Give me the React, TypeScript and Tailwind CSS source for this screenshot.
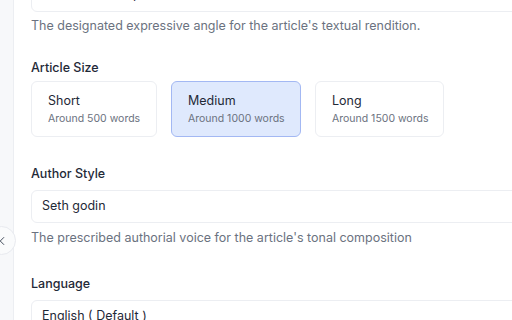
import { ChevronLeft } from "lucide-react";

const sizes = [
  { title: "Short", sub: "Around 500 words", w: "w-[126px]", active: false },
  { title: "Medium", sub: "Around 1000 words", w: "w-[130px]", active: true },
  { title: "Long", sub: "Around 1500 words", w: "w-[129px]", active: false },
];

export default function App() {
  return (
    <div
      className="relative flex h-[320px] w-[512px] overflow-hidden bg-white"
      style={{ fontFamily: "Inter, 'Noto Sans', sans-serif" }}
    >
      <div className="w-[14px] shrink-0 border-r border-[#eceef2] bg-[#f7f8fa]" />

      <button className="absolute left-[-13px] top-[226px] flex h-[29px] w-[29px] items-center justify-end rounded-full border border-[#e8eaef] bg-[#fafbfc] pr-[6px] text-[#374151]">
        <ChevronLeft size={14} strokeWidth={1.6} />
      </button>

      <div className="block w-[560px] shrink-0 self-start pl-[17px]">
        <div className="mt-[-21px] flex h-[33px] items-center rounded-md border border-[#eceef2] px-[10px] text-[12.5px] text-[#1f2937]">
          Formal (Neutral)
        </div>
        <p className="mt-[4px] text-[12.5px] leading-[20px] text-[#6b7280]">
          The designated expressive angle for the article's textual rendition.
        </p>

        <h3 className="mt-[22px] text-[12.5px] font-medium leading-[20px] text-[#1f2937]">Article Size</h3>
        <div className="mt-[3px] flex gap-[14px]">
          {sizes.map((s) => (
            <div
              key={s.title}
              className={`${s.w} shrink-0 whitespace-nowrap rounded-md border px-[16px] pb-[9px] pt-[9px] ${
                s.active ? "border-[#a3b8f3] bg-[#dfe9fd]" : "border-[#eceef2] bg-white"
              }`}
            >
              <div className="text-[12.5px] leading-[20px] text-[#1f2937]">{s.title}</div>
              <div className="text-[10.5px] leading-[16px] text-[#6b7280]">{s.sub}</div>
            </div>
          ))}
        </div>

        <h3 className="mt-[27px] text-[12.5px] font-medium leading-[20px] text-[#1f2937]">Author Style</h3>
        <div className="mt-[6px] flex h-[33px] items-center rounded-md border border-[#eceef2] px-[10px] text-[12.5px] text-[#1f2937]">
          Seth godin
        </div>
        <p className="mt-[5px] text-[12.5px] leading-[20px] text-[#6b7280]">
          The prescribed authorial voice for the article's tonal composition
        </p>

        <h3 className="mt-[26px] text-[12.5px] font-medium leading-[20px] text-[#1f2937]">Language</h3>
        <div className="mt-[6px] flex h-[33px] items-center rounded-md border border-[#eceef2] px-[10px] text-[12.5px] text-[#1f2937]">
          English ( Default )
        </div>
      </div>
    </div>
  );
}
